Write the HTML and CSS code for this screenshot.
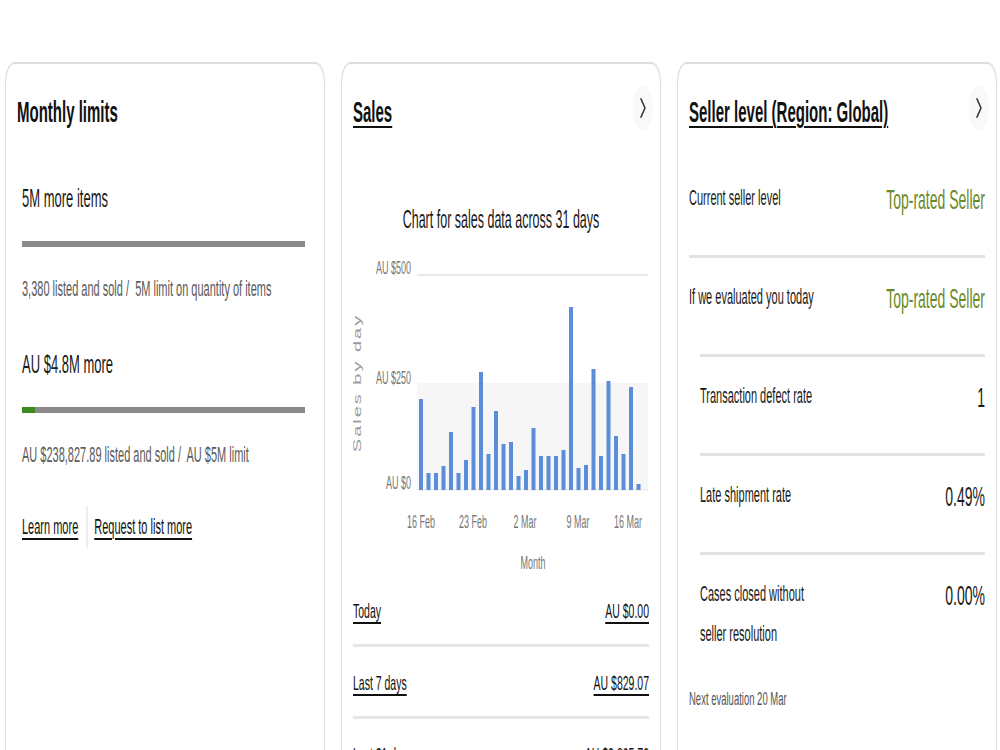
FILE: index.html
```html
<!DOCTYPE html>
<html>
<head>
<meta name="viewport" content="width=device-width, initial-scale=1">
<link rel="stylesheet" href="styles.css">
</head>
<body>

<div class="page">

  <div class="card">
    <div class="card-head">
      <h2>Monthly limits</h2>
    </div>
    <div class="limit">
      <div class="limit-title">5M more items</div>
      <div class="bar"><div class="bar-fill" style="width:0%;"></div></div>
      <div class="limit-note">3,380 listed and sold /&nbsp; 5M limit on quantity of items</div>

      <div class="limit-title second">AU $4.8M more</div>
      <div class="bar"><div class="bar-fill" style="width:4.6%;"></div></div>
      <div class="limit-note">AU $238,827.89 listed and sold /&nbsp; AU $5M limit</div>

      <div class="limit-links">
        <a href="#">Learn more</a>
        <span class="divider"></span>
        <a href="#">Request to list more</a>
      </div>
    </div>
  </div>

  <div class="card">
    <div class="card-head">
      <h2><a href="#">Sales</a></h2>
      <span class="chev"><svg width="12" height="20" viewBox="0 0 12 20"><path d="M2 1 L10 10 L2 19" fill="none" stroke="#333" stroke-width="2.6" stroke-linecap="round" stroke-linejoin="round"/></svg></span>
    </div>

    <div class="chart-title">Chart for sales data across 31 days</div>

    <svg class="chart" width="592" height="325" viewBox="0 0 592 325">
      <rect x="128" y="133" width="462" height="107" fill="#f6f6f6"/>
      <line x1="128" y1="25" x2="590" y2="25" stroke="#e8e8e8" stroke-width="2"/>
      <line x1="128" y1="240" x2="590" y2="240" stroke="#e3e3e3" stroke-width="1"/>
      <text class="axis" x="116" y="24" text-anchor="end">AU $500</text>
      <text class="axis" x="116" y="134" text-anchor="end">AU $250</text>
      <text class="axis" x="116" y="239" text-anchor="end">AU $0</text>
      <text class="axis-name" x="0" y="0" text-anchor="middle" transform="translate(16 133) rotate(-90)">Sales by day</text>
      <g fill="#5b8dd8">
        <rect x="132" y="149" width="8" height="91"/>
        <rect x="147" y="223" width="8" height="17"/>
        <rect x="162" y="223" width="8" height="17"/>
        <rect x="177" y="216" width="8" height="24"/>
        <rect x="192" y="182" width="8" height="58"/>
        <rect x="207" y="223" width="8" height="17"/>
        <rect x="222" y="210" width="8" height="30"/>
        <rect x="237" y="157" width="8" height="83"/>
        <rect x="252" y="122" width="8" height="118"/>
        <rect x="267" y="204" width="8" height="36"/>
        <rect x="282" y="161" width="8" height="79"/>
        <rect x="297" y="194" width="8" height="46"/>
        <rect x="312" y="192" width="8" height="48"/>
        <rect x="327" y="226" width="8" height="14"/>
        <rect x="342" y="220" width="8" height="20"/>
        <rect x="357" y="178" width="8" height="62"/>
        <rect x="372" y="206" width="8" height="34"/>
        <rect x="387" y="206" width="8" height="34"/>
        <rect x="402" y="206" width="8" height="34"/>
        <rect x="417" y="200" width="8" height="40"/>
        <rect x="432" y="57" width="8" height="183"/>
        <rect x="447" y="218" width="8" height="22"/>
        <rect x="462" y="215" width="8" height="25"/>
        <rect x="477" y="119" width="8" height="121"/>
        <rect x="492" y="206" width="8" height="34"/>
        <rect x="507" y="131" width="8" height="109"/>
        <rect x="522" y="186" width="8" height="54"/>
        <rect x="537" y="204" width="8" height="36"/>
        <rect x="552" y="137" width="8" height="103"/>
        <rect x="567" y="234" width="8" height="6"/>
      </g>
      <text class="axis" x="136" y="278" text-anchor="middle">16 Feb</text>
      <text class="axis" x="240" y="278" text-anchor="middle">23 Feb</text>
      <text class="axis" x="344" y="278" text-anchor="middle">2 Mar</text>
      <text class="axis" x="450" y="278" text-anchor="middle">9 Mar</text>
      <text class="axis" x="550" y="278" text-anchor="middle">16 Mar</text>
      <text class="axis" x="360" y="319" text-anchor="middle">Month</text>
    </svg>

    <div class="sales-row"><a href="#">Today</a><a href="#">AU $0.00</a></div>
    <div class="sales-row"><a href="#">Last 7 days</a><a href="#">AU $829.07</a></div>
    <div class="sales-row"><a href="#">Last 31 days</a><a href="#">AU $2,805.70</a></div>
  </div>

  <div class="card">
    <div class="card-head">
      <h2><a href="#">Seller level (Region: Global)</a></h2>
      <span class="chev"><svg width="12" height="20" viewBox="0 0 12 20"><path d="M2 1 L10 10 L2 19" fill="none" stroke="#333" stroke-width="2.6" stroke-linecap="round" stroke-linejoin="round"/></svg></span>
    </div>

    <div class="level-row first">
      <span>Current seller level</span>
      <span class="level">Top-rated Seller</span>
    </div>
    <div class="level-row">
      <span>If we evaluated you today</span>
      <span class="level">Top-rated Seller</span>
    </div>

    <div class="metrics">
      <div class="metric-row">
        <span>Transaction defect rate</span>
        <span class="metric-value">1</span>
      </div>
      <div class="metric-row">
        <span>Late shipment rate</span>
        <span class="metric-value">0.49%</span>
      </div>
      <div class="metric-row last">
        <span>Cases closed without<br>seller resolution</span>
        <span class="metric-value">0.00%</span>
      </div>
    </div>

    <div class="next-eval">Next evaluation 20 Mar</div>
  </div>

</div>

</body>
</html>
```

FILE: styles.css
```css
* {
  box-sizing: border-box;
}

html, body {
  margin: 0;
  overflow: hidden;
  background: #fff;
}

body {
  font-family: "Liberation Sans", Arial, sans-serif;
  color: #191919;
}

.page {
  width: 2000px;
  padding: 62px 0 0 10px;
  display: grid;
  grid-template-columns: repeat(3, 640px);
  gap: 32px;
  transform: scaleX(0.5);
  transform-origin: 0 0;
}

.card {
  min-height: 720px;
  border: 2px solid #dedede;
  border-radius: 20px;
  padding: 28px 22px 0;
}

.card-head {
  display: flex;
  align-items: center;
  justify-content: space-between;
  height: 40px;
}

.card-head h2 {
  margin: 0;
  font-size: 30px;
  line-height: 40px;
  font-weight: bold;
  color: #111;
}

.card a {
  color: #111;
  text-decoration: underline;
  text-decoration-thickness: 2px;
  text-underline-offset: 4px;
}

.chev {
  width: 40px;
  height: 44px;
  border-radius: 50%;
  background: #f9f9f9;
  display: flex;
  align-items: center;
  justify-content: center;
  margin-right: -8px;
  margin-top: -8px;
}

/* monthly limits */
.limit {
  padding: 0 16px 0 10px;
}

.limit-title {
  margin-top: 49px;
  font-size: 26px;
  line-height: 34px;
  color: #1a1a1a;
}

.limit-title.second {
  margin-top: 44px;
}

.bar {
  margin-top: 26px;
  height: 6px;
  background: #8a8a8a;
}

.bar-fill {
  height: 100%;
  background: #3f8a1c;
}

.limit-note {
  margin-top: 28px;
  font-size: 22px;
  line-height: 28px;
  color: #5a5a5a;
}

.limit-links {
  margin-top: 37px;
  display: flex;
  align-items: center;
  height: 42px;
  font-size: 22px;
}

.divider {
  width: 2px;
  height: 42px;
  background: #ddd;
  margin: 0 14px 0 16px;
}

/* sales */
.chart-title {
  margin-top: 72px;
  text-align: center;
  font-size: 25px;
  line-height: 30px;
  color: #1a1a1a;
}

.chart {
  display: block;
  margin-top: 16px;
}

.chart .axis {
  font-family: "Liberation Sans", Arial, sans-serif;
  font-size: 18px;
  fill: #777;
}

.chart .axis-name {
  font-family: "Liberation Sans", Arial, sans-serif;
  font-size: 20px;
  letter-spacing: 2px;
  fill: #9a9a9a;
}

.sales-row {
  display: flex;
  justify-content: space-between;
  padding: 22px 0 19px;
  line-height: 28px;
  font-size: 21px;
  border-bottom: 3px solid #e6e6e6;
}

/* seller level */
.level-row, .metric-row {
  display: flex;
  justify-content: space-between;
  align-items: flex-start;
  padding: 19px 0 37px;
  font-size: 22px;
  line-height: 40px;
  color: #1a1a1a;
}

.level-row.first {
  margin-top: 27px;
  border-bottom: 3px solid #e2e2e2;
}

.level {
  font-size: 28px;
  line-height: 36px;
  color: #6a8a2a;
  padding-top: 4px;
}

.metrics {
  margin-left: 22px;
}

.metric-row {
  border-top: 3px solid #e2e2e2;
}

.metric-row.last {
  padding-bottom: 0;
}

.metric-value {
  font-size: 28px;
  line-height: 36px;
  color: #1a1a1a;
  padding-top: 4px;
}

.next-eval {
  margin-top: 31px;
  font-size: 19px;
  line-height: 28px;
  color: #555;
}
```
